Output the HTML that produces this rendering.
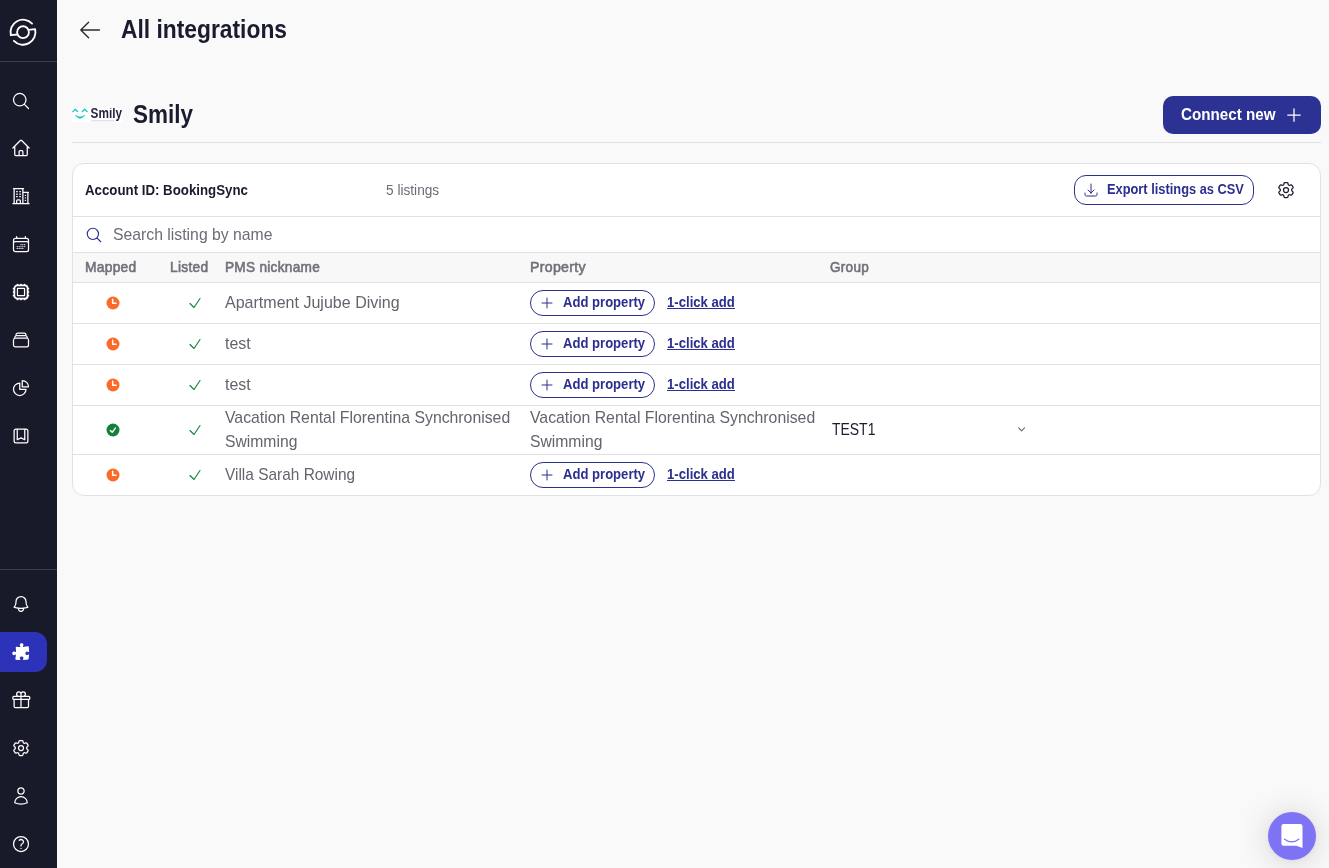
<!DOCTYPE html>
<html lang="en">
<head>
<meta charset="utf-8">
<title>Smily integration</title>
<style>
*{box-sizing:border-box;margin:0;padding:0}
html,body{width:1329px;height:868px;overflow:hidden}
body{background:#f9f9f9;font-family:"Liberation Sans",sans-serif;color:#1a1b2e;position:relative}
#root{position:absolute;left:0;top:0;width:1329px;height:868px;will-change:transform}
.abs{position:absolute}
.t{position:absolute;white-space:nowrap;line-height:1}
/* sidebar */
#side{position:absolute;left:0;top:0;width:57px;height:868px;background:#181a2a}
.sdiv{position:absolute;left:0;width:57px;height:1px;background:#3c3e4b}
.ico{position:absolute;left:11px;width:20px;height:20px;fill:none;stroke:#fff;stroke-width:1.5;stroke-linecap:round;stroke-linejoin:round}
#pill{position:absolute;left:0;top:632px;width:47px;height:40px;background:#2d33b8;border-radius:0 12px 12px 0}
/* header */
.h1{font-weight:bold;font-size:23px;color:#1a1b2e}
#hr{position:absolute;left:72px;top:142px;width:1249px;height:1px;background:#e1e1e3}
#connect{position:absolute;left:1163px;top:96px;width:158px;height:38px;background:#2c3194;border-radius:10px}
/* card */
#card{position:absolute;left:72px;top:163px;width:1249px;height:333px;background:#fff;border:1px solid #e1e1e3;border-radius:12px;overflow:hidden}
.line{position:absolute;left:0;width:1247px;height:1px;background:#e1e1e3}
#thead{position:absolute;left:0;top:89px;width:1247px;height:30px;background:#f8f8f9}
.th{font-size:14px;font-weight:bold;color:#6c6c76}
.td{font-size:16px;color:#5f5f69}
.btn{position:absolute;border:1px solid #2b2f8f;border-radius:15px;background:#fff}
.nv{color:#2b2f8f;font-weight:bold;font-size:14px}
</style>
</head>
<body>
<div id="root">

<!-- SIDEBAR -->
<div id="side">
  <div class="sdiv" style="top:61px"></div>
  <div class="sdiv" style="top:569px"></div>
  <div id="pill"></div>

  <!-- logo -->
  <svg class="abs" style="left:8px;top:17px" width="30" height="30" viewBox="0 0 30 30" fill="none" stroke="#fff" stroke-width="1.85" stroke-linecap="round" stroke-linejoin="round">
    <circle cx="15" cy="15.2" r="5.9"/>
    <path d="M9.5 17.5 L2.87 18.2 A12.5 12.5 0 0 1 24.07 6.6"/>
    <path d="M20.5 12.9 L27.13 12.2 A12.5 12.5 0 0 1 5.93 23.8"/>
  </svg>
  <!-- search -->
  <svg class="ico" style="top:91px" viewBox="0 0 24 24"><path d="m21 21-5.197-5.197m0 0A7.5 7.5 0 1 0 5.196 5.196a7.5 7.5 0 0 0 10.607 10.607Z"/></svg>
  <!-- home -->
  <svg class="ico" style="top:138px" viewBox="0 0 24 24"><path d="m2.25 12 8.954-8.955c.44-.439 1.152-.439 1.591 0L21.75 12M4.5 9.75v10.125c0 .621.504 1.125 1.125 1.125H9.75v-4.875c0-.621.504-1.125 1.125-1.125h2.25c.621 0 1.125.504 1.125 1.125V21h4.125c.621 0 1.125-.504 1.125-1.125V9.75M8.25 21h8.25"/></svg>
  <!-- building -->
  <svg class="ico" style="top:186px" viewBox="0 0 24 24"><path d="M2.25 21h19.5m-18-18v18m10.5-18v18m6-13.5V21M6.75 6.75h.75m-.75 3h.75m-.75 3h.75m3-6h.75m-.75 3h.75m-.75 3h.75M6.75 21v-3.375c0-.621.504-1.125 1.125-1.125h2.25c.621 0 1.125.504 1.125 1.125V21M3 3h12m-.75 4.5H21m-3.75 3.750h.008v.008h-.008v-.008Zm0 3h.008v.008h-.008v-.008Zm0 3h.008v.008h-.008v-.008Z"/></svg>
  <!-- calendar -->
  <svg class="ico" style="top:234px" viewBox="0 0 24 24"><path d="M6.75 3v2.25M17.25 3v2.25M3 18.75V7.5a2.25 2.25 0 0 1 2.25-2.25h13.5A2.25 2.25 0 0 1 21 7.5v11.25m-18 0A2.25 2.25 0 0 0 5.25 21h13.5A2.25 2.25 0 0 0 21 18.750m-18 0v-7.500A2.250 2.250 0 0 1 5.250 9h13.500A2.250 2.250 0 0 1 21 11.250v7.500m-9-6h.008v.008H12v-.008ZM12 15h.008v.008H12V15Zm0 2.250h.008v.008H12v-.008ZM9.750 15h.008v.008H9.750V15Zm0 2.250h.008v.008H9.750v-.008ZM7.500 15h.008v.008H7.500V15Zm0 2.250h.008v.008H7.500v-.008Zm6.750-4.500h.008v.008h-.008v-.008Zm0 2.250h.008v.008h-.008V15Zm0 2.250h.008v.008h-.008v-.008Zm2.250-4.500h.008v.008H16.500v-.008Zm0 2.250h.008v.008H16.500V15Z"/></svg>
  <!-- stamp -->
  <svg class="ico" style="top:282px" viewBox="0 0 24 24"><rect x="4.05" y="4.05" width="15.9" height="15.9" rx="3.6" stroke-width="2.1"/><g fill="#fff" stroke="none"><circle cx="7.80" cy="3.10" r="1.05"/><circle cx="7.80" cy="20.90" r="1.05"/><circle cx="3.10" cy="7.80" r="1.05"/><circle cx="20.90" cy="7.80" r="1.05"/><circle cx="12.00" cy="3.10" r="1.05"/><circle cx="12.00" cy="20.90" r="1.05"/><circle cx="3.10" cy="12.00" r="1.05"/><circle cx="20.90" cy="12.00" r="1.05"/><circle cx="16.20" cy="3.10" r="1.05"/><circle cx="16.20" cy="20.90" r="1.05"/><circle cx="3.10" cy="16.20" r="1.05"/><circle cx="20.90" cy="16.20" r="1.05"/></g><rect x="7.75" y="7.75" width="8.5" height="8.5" rx="0.4" stroke-width="1.5"/></svg>
  <!-- rectangle stack -->
  <svg class="ico" style="top:330px" viewBox="0 0 24 24"><path d="M6 6.878V6a2.250 2.250 0 0 1 2.250-2.250h7.500A2.250 2.250 0 0 1 18 6v.878m-12 0c.235-.083.487-.128.750-.128h10.500c.263 0 .515.045.750.128m-12 0A2.250 2.250 0 0 0 4.500 9v.878m13.500-3A2.250 2.250 0 0 1 19.500 9v.878m0 0a2.246 2.246 0 0 0-.750-.128H5.250c-.263 0-.515.045-.750.128m15 0A2.250 2.250 0 0 1 21 12v6a2.250 2.250 0 0 1-2.250 2.250H5.250A2.250 2.250 0 0 1 3 18v-6c0-.980.626-1.813 1.500-2.122"/></svg>
  <!-- chart pie -->
  <svg class="ico" style="top:378px" viewBox="0 0 24 24"><path d="M10.5 6a7.500 7.500 0 1 0 7.500 7.500h-7.500V6Z"/><path d="M13.500 10.500H21A7.500 7.500 0 0 0 13.500 3v7.500Z"/></svg>
  <!-- bookmark square -->
  <svg class="ico" style="top:426px" viewBox="0 0 24 24"><path d="M16.500 3.750V16.500L12 14.250 7.500 16.500V3.750m9 0H18A2.250 2.250 0 0 1 20.250 6v12A2.250 2.250 0 0 1 18 20.250H6A2.250 2.250 0 0 1 3.750 18V6A2.250 2.250 0 0 1 6 3.750h1.500m9 0h-9"/></svg>
  <!-- bell -->
  <svg class="ico" style="top:594px" viewBox="0 0 24 24"><path d="M14.857 17.082a23.848 23.848 0 0 0 5.454-1.310A8.967 8.967 0 0 1 18 9.750V9A6 6 0 0 0 6 9v.750a8.967 8.967 0 0 1-2.312 6.022c1.733.640 3.560 1.085 5.455 1.310m5.714 0a24.255 24.255 0 0 1-5.714 0m5.714 0a3 3 0 1 1-5.714 0"/></svg>
  <!-- puzzle (solid) -->
  <svg class="ico" style="top:642px;fill:#fff;stroke:none" viewBox="0 0 24 24"><path d="M11.250 5.337c0-.355-.186-.676-.401-.959a1.647 1.647 0 0 1-.349-1.003c0-1.036 1.007-1.875 2.250-1.875S15 2.340 15 3.375c0 .369-.128.713-.349 1.003-.215.283-.401.604-.401.959 0 .332.278.598.610.578 1.910-.114 3.790-.342 5.632-.676a.750.750 0 0 1 .878.645 49.170 49.170 0 0 1 .376 5.452.657.657 0 0 1-.660.664c-.354 0-.675-.186-.958-.401a1.647 1.647 0 0 0-1.003-.349c-1.035 0-1.875 1.007-1.875 2.250s.840 2.250 1.875 2.250c.369 0 .713-.128 1.003-.349.283-.215.604-.401.959-.401.310 0 .557.262.534.571a48.774 48.774 0 0 1-.595 4.845.750.750 0 0 1-.610.610c-1.820.317-3.673.533-5.555.642a.580.580 0 0 1-.611-.581c0-.355.186-.676.401-.959.221-.290.349-.634.349-1.003 0-1.035-1.007-1.875-2.250-1.875s-2.250.840-2.250 1.875c0 .369.128.713.349 1.003.215.283.401.604.401.959a.641.641 0 0 1-.658.643 49.118 49.118 0 0 1-4.708-.360.750.750 0 0 1-.645-.878c.293-1.614.504-3.257.629-4.924A.530.530 0 0 0 5.337 15c-.355 0-.676.186-.959.401-.290.221-.634.349-1.003.349-1.036 0-1.875-1.007-1.875-2.250s.840-2.250 1.875-2.250c.369 0 .713.128 1.003.349.283.215.604.401.959.401a.656.656 0 0 0 .659-.663 47.703 47.703 0 0 0-.310-4.820.750.750 0 0 1 .830-.832c1.343.155 2.703.254 4.077.294a.640.640 0 0 0 .657-.642Z"/></svg>
  <!-- gift -->
  <svg class="ico" style="top:690px" viewBox="0 0 24 24"><path d="M21 11.250v8.250a1.500 1.500 0 0 1-1.500 1.500H5.250a1.500 1.500 0 0 1-1.500-1.500v-8.250M12 4.875A2.625 2.625 0 1 0 9.375 7.500H12m0-2.625V7.500m0-2.625A2.625 2.625 0 1 1 14.625 7.500H12m0 0V21m-8.625-9.750h18c.621 0 1.125-.504 1.125-1.125v-1.500c0-.621-.504-1.125-1.125-1.125h-18c-.621 0-1.125.504-1.125 1.125v1.500c0 .621.504 1.125 1.125 1.125Z"/></svg>
  <!-- cog -->
  <svg class="ico" style="top:738px" viewBox="0 0 24 24"><path d="M9.594 3.940c.090-.542.560-.940 1.110-.940h2.593c.550 0 1.020.398 1.110.940l.213 1.281c.063.374.313.686.645.870.074.040.147.083.220.127.325.196.720.257 1.075.124l1.217-.456a1.125 1.125 0 0 1 1.370.490l1.296 2.247a1.125 1.125 0 0 1-.260 1.431l-1.003.827c-.293.241-.438.613-.430.992a7.723 7.723 0 0 1 0 .255c-.008.378.137.750.430.991l1.004.827c.424.350.534.955.260 1.430l-1.298 2.247a1.125 1.125 0 0 1-1.369.491l-1.217-.456c-.355-.133-.750-.072-1.076.124a6.470 6.470 0 0 1-.220.128c-.331.183-.581.495-.644.869l-.213 1.281c-.090.543-.560.940-1.110.940h-2.594c-.550 0-1.019-.398-1.110-.940l-.213-1.281c-.062-.374-.312-.686-.644-.870a6.520 6.520 0 0 1-.220-.127c-.325-.196-.720-.257-1.076-.124l-1.217.456a1.125 1.125 0 0 1-1.369-.490l-1.297-2.247a1.125 1.125 0 0 1 .260-1.431l1.004-.827c.292-.240.437-.613.430-.991a6.932 6.932 0 0 1 0-.255c.007-.380-.138-.751-.430-.992l-1.004-.827a1.125 1.125 0 0 1-.260-1.430l1.297-2.247a1.125 1.125 0 0 1 1.370-.491l1.216.456c.356.133.751.072 1.076-.124.072-.044.146-.086.220-.128.332-.183.582-.495.644-.869l.214-1.280Z"/><path d="M15 12a3 3 0 1 1-6 0 3 3 0 0 1 6 0Z"/></svg>
  <!-- user -->
  <svg class="ico" style="top:786px" viewBox="0 0 24 24"><path d="M15.750 6a3.750 3.750 0 1 1-7.500 0 3.750 3.750 0 0 1 7.500 0ZM4.501 20.118a7.500 7.500 0 0 1 14.998 0A17.933 17.933 0 0 1 12 21.750c-2.676 0-5.216-.584-7.499-1.632Z"/></svg>
  <!-- help -->
  <svg class="ico" style="top:834px" viewBox="0 0 24 24"><path d="M9.879 7.519c1.171-1.025 3.071-1.025 4.242 0 1.172 1.025 1.172 2.687 0 3.712-.203.179-.430.326-.670.442-.745.361-1.450.999-1.450 1.827v.750M21 12a9 9 0 1 1-18 0 9 9 0 0 1 18 0Zm-9 5.250h.008v.008H12v-.008Z"/></svg>
</div>

<!-- PAGE HEADER -->

<!-- back arrow -->
<svg class="abs" style="left:76px;top:18px" width="28" height="24" viewBox="0 0 28 24" fill="none" stroke="#2a2a2e" stroke-width="1.4" stroke-linecap="round" stroke-linejoin="round"><path d="M23.400 12H4.800M12.600 4.200 4.800 12l7.800 7.800"/></svg>
<!-- smily logo -->
<svg class="abs" style="left:72px;top:107.500px" width="50" height="14.500" viewBox="0 0 50 14.500">
  <rect width="50" height="14.500" fill="#fff"/>
  <path d="M0.500 4.100 L3.200 1.300 L6 4.100" fill="none" stroke="#1fc8bf" stroke-width="1.350" stroke-linejoin="miter"/>
  <path d="M9.900 4.100 L12.700 1.300 L15.500 4.100" fill="none" stroke="#1fc8bf" stroke-width="1.350" stroke-linejoin="miter"/>
  <path d="M3.400 7.200 Q8 13.400 12.800 7.200 Q8 10.800 3.400 7.200Z" fill="#1fc8bf" stroke="#1fc8bf" stroke-width="0.700" stroke-linejoin="round"/>
  <text x="18.600" y="10.300" font-family="Liberation Sans, sans-serif" font-size="14.100" font-weight="bold" fill="#23233f" textLength="31.400" lengthAdjust="spacingAndGlyphs">Smily</text>
  <rect x="18.800" y="12.400" width="23.500" height="0.900" fill="#cfcfe0"/>
</svg>
<div id="hr"></div>
<div id="connect"></div>

<svg class="abs" style="left:1284px;top:105px" width="20" height="20" viewBox="0 0 24 24" fill="none" stroke="#fff" stroke-width="1.500" stroke-linecap="round" stroke-linejoin="round"><path d="M12 4.500v15m7.500-7.500h-15"/></svg>

<!-- CARD -->
<div id="card">
  <div class="line" style="top:52px"></div>
  <div class="line" style="top:88px"></div>
  <div id="thead"></div>
  <div class="line" style="top:118px"></div>
  <div class="line" style="top:159px"></div>
  <div class="line" style="top:200px"></div>
  <div class="line" style="top:241px"></div>
  <div class="line" style="top:290px"></div>
</div>

<!-- card header -->
<div class="btn" style="left:1074px;top:175px;width:180px;height:30px;border-radius:12px"></div>
<svg class="abs" style="left:1083px;top:182px" width="16" height="16" viewBox="0 0 24 24" fill="none" stroke="#2b2f8f" stroke-width="1.500" stroke-linecap="round" stroke-linejoin="round"><path d="M3 16.500v2.250A2.250 2.250 0 0 0 5.250 21h13.500A2.250 2.250 0 0 0 21 18.750V16.500M16.500 12 12 16.500m0 0L7.500 12m4.500 4.500V3"/></svg>
<svg class="abs" style="left:1276px;top:180px" width="20" height="20" viewBox="0 0 24 24" fill="none" stroke="#1a1b2e" stroke-width="1.500" stroke-linecap="round" stroke-linejoin="round"><path d="M9.594 3.940c.090-.542.560-.940 1.110-.940h2.593c.550 0 1.020.398 1.110.940l.213 1.281c.063.374.313.686.645.870.074.040.147.083.220.127.325.196.720.257 1.075.124l1.217-.456a1.125 1.125 0 0 1 1.370.490l1.296 2.247a1.125 1.125 0 0 1-.260 1.431l-1.003.827c-.293.241-.438.613-.430.992a7.723 7.723 0 0 1 0 .255c-.008.378.137.750.430.991l1.004.827c.424.350.534.955.260 1.430l-1.298 2.247a1.125 1.125 0 0 1-1.369.491l-1.217-.456c-.355-.133-.750-.072-1.076.124a6.470 6.470 0 0 1-.220.128c-.331.183-.581.495-.644.869l-.213 1.281c-.090.543-.560.940-1.110.940h-2.594c-.550 0-1.019-.398-1.110-.940l-.213-1.281c-.062-.374-.312-.686-.644-.870a6.520 6.520 0 0 1-.220-.127c-.325-.196-.720-.257-1.076-.124l-1.217.456a1.125 1.125 0 0 1-1.369-.490l-1.297-2.247a1.125 1.125 0 0 1 .260-1.431l1.004-.827c.292-.240.437-.613.430-.991a6.932 6.932 0 0 1 0-.255c.007-.380-.138-.751-.430-.992l-1.004-.827a1.125 1.125 0 0 1-.260-1.430l1.297-2.247a1.125 1.125 0 0 1 1.370-.491l1.216.456c.356.133.751.072 1.076-.124.072-.044.146-.086.220-.128.332-.183.582-.495.644-.869l.214-1.280Z"/><path d="M15 12a3 3 0 1 1-6 0 3 3 0 0 1 6 0Z"/></svg>

<!-- search row -->
<svg class="abs" style="left:85px;top:225.500px" width="18" height="18" viewBox="0 0 24 24" fill="none" stroke="#2b2f8f" stroke-width="1.500" stroke-linecap="round" stroke-linejoin="round"><path d="m21 21-5.197-5.197m0 0A7.500 7.500 0 1 0 5.196 5.196a7.500 7.500 0 0 0 10.607 10.607Z"/></svg>

<!-- table header -->

<!-- rows -->
<svg class="abs" style="left:105px;top:295px" width="16" height="16" viewBox="0 0 24 24"><circle cx="12" cy="12" r="9.750" fill="#fb6a28"/><path d="M11.500 6.200V12.400H16.600" fill="none" stroke="#fff" stroke-width="2.200" stroke-linecap="round" stroke-linejoin="round"/></svg>
<svg class="abs" style="left:187px;top:295px" width="16" height="16" viewBox="0 0 24 24" fill="none" stroke="#16843e" stroke-width="1.750" stroke-linecap="round" stroke-linejoin="round"><path d="m4.500 12.750 6 6 9-13.500"/></svg>
<div class="btn" style="left:530px;top:290px;width:125px;height:26px"></div>
<svg class="abs" style="left:539px;top:295px" width="16" height="16" viewBox="0 0 24 24" fill="none" stroke="#2b2f8f" stroke-width="1.500" stroke-linecap="round" stroke-linejoin="round"><path d="M12 4.500v15m7.500-7.500h-15"/></svg>
<svg class="abs" style="left:105px;top:336px" width="16" height="16" viewBox="0 0 24 24"><circle cx="12" cy="12" r="9.750" fill="#fb6a28"/><path d="M11.500 6.200V12.400H16.600" fill="none" stroke="#fff" stroke-width="2.200" stroke-linecap="round" stroke-linejoin="round"/></svg>
<svg class="abs" style="left:187px;top:336px" width="16" height="16" viewBox="0 0 24 24" fill="none" stroke="#16843e" stroke-width="1.750" stroke-linecap="round" stroke-linejoin="round"><path d="m4.500 12.750 6 6 9-13.500"/></svg>
<div class="btn" style="left:530px;top:331px;width:125px;height:26px"></div>
<svg class="abs" style="left:539px;top:336px" width="16" height="16" viewBox="0 0 24 24" fill="none" stroke="#2b2f8f" stroke-width="1.500" stroke-linecap="round" stroke-linejoin="round"><path d="M12 4.500v15m7.500-7.500h-15"/></svg>
<svg class="abs" style="left:105px;top:377px" width="16" height="16" viewBox="0 0 24 24"><circle cx="12" cy="12" r="9.750" fill="#fb6a28"/><path d="M11.500 6.200V12.400H16.600" fill="none" stroke="#fff" stroke-width="2.200" stroke-linecap="round" stroke-linejoin="round"/></svg>
<svg class="abs" style="left:187px;top:377px" width="16" height="16" viewBox="0 0 24 24" fill="none" stroke="#16843e" stroke-width="1.750" stroke-linecap="round" stroke-linejoin="round"><path d="m4.500 12.750 6 6 9-13.500"/></svg>
<div class="btn" style="left:530px;top:372px;width:125px;height:26px"></div>
<svg class="abs" style="left:539px;top:377px" width="16" height="16" viewBox="0 0 24 24" fill="none" stroke="#2b2f8f" stroke-width="1.500" stroke-linecap="round" stroke-linejoin="round"><path d="M12 4.500v15m7.500-7.500h-15"/></svg>
<svg class="abs" style="left:105px;top:467px" width="16" height="16" viewBox="0 0 24 24"><circle cx="12" cy="12" r="9.750" fill="#fb6a28"/><path d="M11.500 6.200V12.400H16.600" fill="none" stroke="#fff" stroke-width="2.200" stroke-linecap="round" stroke-linejoin="round"/></svg>
<svg class="abs" style="left:187px;top:467px" width="16" height="16" viewBox="0 0 24 24" fill="none" stroke="#16843e" stroke-width="1.750" stroke-linecap="round" stroke-linejoin="round"><path d="m4.500 12.750 6 6 9-13.500"/></svg>
<div class="btn" style="left:530px;top:462px;width:125px;height:26px"></div>
<svg class="abs" style="left:539px;top:467px" width="16" height="16" viewBox="0 0 24 24" fill="none" stroke="#2b2f8f" stroke-width="1.500" stroke-linecap="round" stroke-linejoin="round"><path d="M12 4.500v15m7.500-7.500h-15"/></svg>
<svg class="abs" style="left:105px;top:422px" width="16" height="16" viewBox="0 0 24 24"><circle cx="12" cy="12" r="9.750" fill="#157f3c"/><path d="M8 12.700 10.800 15.500 15.500 9.100" fill="none" stroke="#fff" stroke-width="2.100" stroke-linecap="round" stroke-linejoin="round"/></svg>
<svg class="abs" style="left:187px;top:422px" width="16" height="16" viewBox="0 0 24 24" fill="none" stroke="#16843e" stroke-width="1.750" stroke-linecap="round" stroke-linejoin="round"><path d="m4.500 12.750 6 6 9-13.500"/></svg>
<svg class="abs" style="left:1016px;top:425px" width="10" height="8" viewBox="0 0 10 8" fill="none" stroke="#66666e" stroke-width="1.100" stroke-linecap="round" stroke-linejoin="round"><path d="M2.700 2.900 5.600 5.900 8.500 2.900"/></svg>

<!-- chat launcher -->
<div class="abs" style="left:1268px;top:812px;width:48px;height:48px;border-radius:50%;background:#7f73f5;box-shadow:0 1px 6px rgba(0,0,0,.06),0 2px 32px rgba(0,0,0,.16)"></div>
<svg class="abs" style="left:1280px;top:822px" width="24" height="28" viewBox="0 0 24 28"><path d="M3.600 2 H20.300 A2.200 2.200 0 0 1 22.500 4.200 V26 L16.400 23.800 H3.600 A2.200 2.200 0 0 1 1.400 21.600 V4.200 A2.200 2.200 0 0 1 3.600 2Z" fill="#fff"/><path d="M4.600 17.200 Q11.700 22.600 18.800 17.200" fill="none" stroke="#7f73f5" stroke-width="1.300" stroke-linecap="round"/></svg>

<span class="t" style="left:120.7px;top:17px;font-size:24.9px;color:#1a1b2e;font-weight:bold;transform:scaleX(0.9163);transform-origin:0 0;">All integrations</span>
<span class="t" style="left:133.0px;top:102px;font-size:24.9px;color:#1a1b2e;font-weight:bold;transform:scaleX(0.9033);transform-origin:0 0;">Smily</span>
<span class="t" style="left:1180.9px;top:107px;font-size:16.7px;color:#fff;font-weight:bold;transform:scaleX(0.9100);transform-origin:0 0;">Connect new</span>
<span class="t" style="left:85.4px;top:183px;font-size:14.4px;color:#1a1b2e;font-weight:bold;transform:scaleX(0.9219);transform-origin:0 0;">Account ID: BookingSync</span>
<span class="t" style="left:385.7px;top:183px;font-size:14.6px;color:#6c6c76;transform:scaleX(0.9369);transform-origin:0 0;">5 listings</span>
<span class="t" style="left:1107.3px;top:182px;font-size:14.1px;color:#2b2f8f;font-weight:bold;transform:scaleX(0.9104);transform-origin:0 0;">Export listings as CSV</span>
<span class="t" style="left:112.6px;top:226px;font-size:16.2px;color:#6c6c76;transform:scaleX(0.9740);transform-origin:0 0;">Search listing by name</span>
<span class="t" style="left:85.4px;top:260px;font-size:14.8px;color:#707079;-webkit-text-stroke:0.6px #707079;letter-spacing:0.3px;transform:scaleX(0.9316);transform-origin:0 0;">Mapped</span>
<span class="t" style="left:170.4px;top:260px;font-size:14.8px;color:#707079;-webkit-text-stroke:0.6px #707079;letter-spacing:0.3px;transform:scaleX(0.9274);transform-origin:0 0;">Listed</span>
<span class="t" style="left:225.3px;top:260px;font-size:14.8px;color:#707079;-webkit-text-stroke:0.6px #707079;letter-spacing:0.3px;transform:scaleX(0.9214);transform-origin:0 0;">PMS nickname</span>
<span class="t" style="left:530.2px;top:260px;font-size:14.8px;color:#707079;-webkit-text-stroke:0.6px #707079;letter-spacing:0.3px;transform:scaleX(0.9567);transform-origin:0 0;">Property</span>
<span class="t" style="left:830.3px;top:260px;font-size:14.8px;color:#707079;-webkit-text-stroke:0.6px #707079;letter-spacing:0.3px;transform:scaleX(0.9150);transform-origin:0 0;">Group</span>
<span class="t" style="left:225.4px;top:294px;font-size:16.2px;color:#64646e;transform:scaleX(0.9906);transform-origin:0 0;">Apartment Jujube Diving</span>
<span class="t" style="left:225.4px;top:335px;font-size:16.2px;color:#64646e;transform:scaleX(0.9849);transform-origin:0 0;">test</span>
<span class="t" style="left:225.4px;top:376px;font-size:16.2px;color:#64646e;transform:scaleX(0.9849);transform-origin:0 0;">test</span>
<span class="t" style="left:225.4px;top:409px;font-size:16.2px;color:#64646e;transform:scaleX(0.9762);transform-origin:0 0;">Vacation Rental Florentina Synchronised</span>
<span class="t" style="left:225.4px;top:433px;font-size:16.2px;color:#64646e;transform:scaleX(0.9698);transform-origin:0 0;">Swimming</span>
<span class="t" style="left:530.4px;top:409px;font-size:16.2px;color:#64646e;transform:scaleX(0.9762);transform-origin:0 0;">Vacation Rental Florentina Synchronised</span>
<span class="t" style="left:530.4px;top:433px;font-size:16.2px;color:#64646e;transform:scaleX(0.9698);transform-origin:0 0;">Swimming</span>
<span class="t" style="left:225.4px;top:466px;font-size:16.2px;color:#64646e;transform:scaleX(0.9532);transform-origin:0 0;">Villa Sarah Rowing</span>
<span class="t" style="left:831.6px;top:422px;font-size:16.8px;color:#1a1b2e;transform:scaleX(0.8309);transform-origin:0 0;">TEST1</span>
<span class="t" style="left:563.4px;top:295px;font-size:14.5px;color:#2b2f8f;font-weight:bold;transform:scaleX(0.9019);transform-origin:0 0;">Add property</span>
<span class="t" style="left:667.4px;top:295px;font-size:14.5px;color:#2b2f8f;font-weight:bold;transform:scaleX(0.9059);transform-origin:0 0;">1-click add</span>
<div class="abs" style="left:667.4px;top:307.6px;width:67.9px;height:1.4px;background:#2b2f8f"></div>
<span class="t" style="left:563.4px;top:336px;font-size:14.5px;color:#2b2f8f;font-weight:bold;transform:scaleX(0.9019);transform-origin:0 0;">Add property</span>
<span class="t" style="left:667.4px;top:336px;font-size:14.5px;color:#2b2f8f;font-weight:bold;transform:scaleX(0.9059);transform-origin:0 0;">1-click add</span>
<div class="abs" style="left:667.4px;top:348.6px;width:67.9px;height:1.4px;background:#2b2f8f"></div>
<span class="t" style="left:563.4px;top:377px;font-size:14.5px;color:#2b2f8f;font-weight:bold;transform:scaleX(0.9019);transform-origin:0 0;">Add property</span>
<span class="t" style="left:667.4px;top:377px;font-size:14.5px;color:#2b2f8f;font-weight:bold;transform:scaleX(0.9059);transform-origin:0 0;">1-click add</span>
<div class="abs" style="left:667.4px;top:389.6px;width:67.9px;height:1.4px;background:#2b2f8f"></div>
<span class="t" style="left:563.4px;top:467px;font-size:14.5px;color:#2b2f8f;font-weight:bold;transform:scaleX(0.9019);transform-origin:0 0;">Add property</span>
<span class="t" style="left:667.4px;top:467px;font-size:14.5px;color:#2b2f8f;font-weight:bold;transform:scaleX(0.9059);transform-origin:0 0;">1-click add</span>
<div class="abs" style="left:667.4px;top:479.6px;width:67.9px;height:1.4px;background:#2b2f8f"></div>
</div>
</body>
</html>
